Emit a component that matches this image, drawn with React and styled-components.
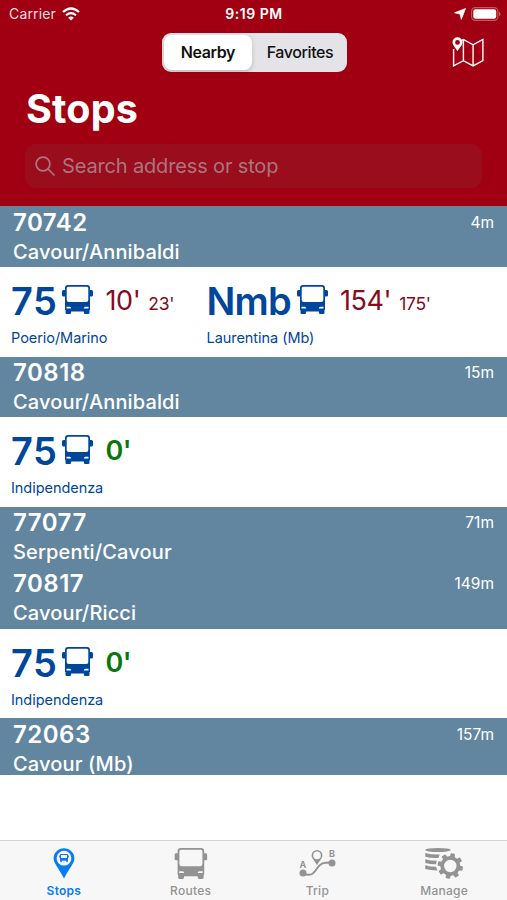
import styled, { createGlobalStyle } from "styled-components";

const GlobalStyle = createGlobalStyle`
  * {
    box-sizing: border-box;
  }
  body {
    margin: 0;
    background: white;
    font-family: Inter, "Liberation Sans", sans-serif;
  }
  svg {
    display: block;
    flex: none;
  }
`;

const Screen = styled.div`
  width: 507px;
  height: 900px;
  display: flex;
  flex-direction: column;
  background: white;
  overflow: hidden;
`;

const Header = styled.header`
  height: 206px;
  flex: none;
  background: #a00012;
  color: white;
`;

const StatusBar = styled.div`
  height: 27px;
  padding: 0 8px 0 9px;
  display: grid;
  grid-template-columns: 1fr auto 1fr;
  align-items: center;
  font-size: 14px;
`;

const StatusGroup = styled.div`
  display: flex;
  align-items: center;
  justify-content: ${(props) => props.$align};
  gap: ${(props) => (props.$align === "flex-end" ? "5px" : "6px")};
  margin-right: ${(props) => (props.$align === "flex-end" ? "-2px" : 0)};
`;

const Carrier = styled.span`
  color: #f6dfe2;
  letter-spacing: 0.15px;
`;

const Clock = styled.span`
  font-weight: 600;
  letter-spacing: 0.5px;
`;

const NavBar = styled.div`
  height: 51px;
  padding: 0 23px 0 162px;
  display: flex;
  align-items: center;
  justify-content: space-between;
`;

const Segmented = styled.div`
  width: 185px;
  height: 39px;
  padding: 2px;
  display: flex;
  border-radius: 9px;
  background: #e4e3e7;
`;

const Segment = styled.button`
  width: ${(props) => (props.$active ? "88px" : "93px")};
  padding: ${(props) => (props.$active ? "0 0 2px" : "0 0 2px 3px")};
  border: none;
  border-radius: 8px;
  background: ${(props) => (props.$active ? "white" : "transparent")};
  box-shadow: ${(props) =>
    props.$active ? "0 2px 5px rgba(0, 0, 0, 0.18)" : "none"};
  color: #111;
  font-family: inherit;
  font-size: 16px;
  font-weight: ${(props) => (props.$active ? 600 : 500)};
  letter-spacing: -0.4px;
  cursor: pointer;
`;

const Title = styled.h1`
  height: 66px;
  margin: 0;
  padding: 6px 0 0 26px;
  font-size: 39.5px;
  line-height: 50px;
  font-weight: 700;
  letter-spacing: 0.2px;
`;

const SearchField = styled.div`
  width: 457px;
  height: 44px;
  margin-left: 25px;
  padding-left: 10px;
  display: flex;
  align-items: center;
  gap: 7px;
  border-radius: 11px;
  background: #990d1d;
  color: #ab767d;
  font-size: 20px;
`;

const Placeholder = styled.span`
  letter-spacing: -0.15px;
`;

const List = styled.main`
  flex: 1;
`;

const StopHeader = styled.div`
  height: ${(props) => props.$height}px;
  padding: ${(props) => props.$top}px 13px 0;
  display: flex;
  justify-content: space-between;
  background: #6286a0;
  color: white;
`;

const StopName = styled.div`
  display: flex;
  flex-direction: column;
`;

const StopCode = styled.span`
  font-size: 24px;
  line-height: 31px;
  font-weight: 600;
  letter-spacing: 0.5px;
`;

const StopAddress = styled.span`
  font-size: 20px;
  line-height: 29px;
  font-weight: 500;
  letter-spacing: 0.14px;
`;

const Distance = styled.span`
  font-size: 15.5px;
  line-height: 32px;
`;

const Arrivals = styled.div`
  height: ${(props) => props.$height}px;
  padding-left: 11px;
  display: flex;
`;

const Line = styled.div`
  width: 195.5px;
  color: #00469a;
`;

const LineTop = styled.div`
  height: 60px;
  padding-top: 7px;
  display: flex;
  align-items: center;
`;

const LineNumber = styled.span`
  font-size: 38px;
  line-height: 46px;
  font-weight: 600;
  letter-spacing: ${(props) => (props.$wide ? "-0.8px" : "0.5px")};
  margin-right: ${(props) => (props.$wide ? "6px" : "5px")};
`;

const BusIcon = styled.svg`
  margin-top: -2px;
`;

const Minutes = styled.span`
  margin-left: 12px;
  font-size: 27px;
  font-weight: ${(props) => (props.$now ? 600 : 400)};
  letter-spacing: -0.4px;
  color: ${(props) => (props.$now ? "#087808" : "#850b20")};
`;

const NextMinutes = styled.span`
  margin: 6px 0 0 8px;
  font-size: 17.5px;
  letter-spacing: -0.3px;
  color: #850b20;
`;

const Direction = styled.div`
  font-size: 14.5px;
  line-height: 22px;
  letter-spacing: -0.05px;
`;

const TabBar = styled.nav`
  height: 60px;
  flex: none;
  display: grid;
  grid-template-columns: repeat(4, 1fr);
  border-top: 1px solid #d6d6d6;
  background: #f7f7f7;
`;

const Tab = styled.a`
  padding: 5px 0 0 1px;
  display: flex;
  flex-direction: column;
  align-items: center;
  color: ${(props) => (props.$active ? "#087cf5" : "#939393")};
  font-size: 12px;
  font-weight: ${(props) => (props.$active ? 600 : 500)};
  line-height: 14px;
  letter-spacing: 0.25px;
  gap: 4px;
`;

const stops = [
  {
    code: "70742",
    address: "Cavour/Annibaldi",
    distance: "4m",
    height: 61,
    top: 1,
    rowHeight: 90,
    lines: [
      { number: "75", now: "10'", next: "23'", direction: "Poerio/Marino" },
      { number: "Nmb", now: "154'", next: "175'", direction: "Laurentina (Mb)" },
    ],
  },
  {
    code: "70818",
    address: "Cavour/Annibaldi",
    distance: "15m",
    height: 60,
    top: 0,
    rowHeight: 90,
    lines: [{ number: "75", now: "0'", direction: "Indipendenza" }],
  },
  {
    code: "77077",
    address: "Serpenti/Cavour",
    distance: "71m",
    height: 61,
    top: 0,
    lines: [],
  },
  {
    code: "70817",
    address: "Cavour/Ricci",
    distance: "149m",
    height: 61,
    top: 0,
    rowHeight: 89,
    lines: [{ number: "75", now: "0'", direction: "Indipendenza" }],
  },
  {
    code: "72063",
    address: "Cavour (Mb)",
    distance: "157m",
    height: 57,
    top: 1,
    lines: [],
  },
];

const Bus = ({ width = 31, height = 29 }) => (
  <BusIcon
    width={width}
    height={height}
    viewBox="0 0 31 29"
    preserveAspectRatio="none"
    fill="currentColor"
  >
    <path
      fillRule="evenodd"
      d="M6 0h19q3 0 3 3v2h1.500q1.500 0 1.500 1.500v3.700q0 1.300-1.500 1.300H28V25h-.5v2.700q0 1.300-1.300 1.300h-3q-1.300 0-1.300-1.300V26.500H9.100v1.200q0 1.300-1.300 1.300h-3q-1.300 0-1.300-1.300V25H3V11.500H1.500Q0 11.500 0 10.200V6.500Q0 5 1.500 5H3V3q0-3 3-3zM6.200 1.700q-1.500 0-1.500 1.500V15q0 2 2 2h17.600q2 0 2-2V3.200q0-1.500-1.500-1.500zM4.500 21.700v1.800h4.700q0-1.600-1.700-1.700zM26.500 21.700v1.800h-4.700q0-1.600 1.700-1.700z"
    />
  </BusIcon>
);

const Wifi = () => (
  <svg width="18" height="14" viewBox="0 0 18 14" fill="none" stroke="white">
    <path d="M1 5Q9-2 17 5" strokeWidth="2.300" />
    <path d="M4 8.200q5-4.300 10 0" strokeWidth="2.100" />
    <path d="M9 13.600 6.100 10.700q2.900-2.400 5.800 0z" fill="white" stroke="none" />
  </svg>
);

const LocationArrow = () => (
  <svg width="12" height="12" viewBox="0 0 12 12" fill="white">
    <path d="M11.500.5 7.300 11.500 6 6 .5 4.800z" stroke="white" strokeWidth=".7" strokeLinejoin="round" />
  </svg>
);

const Battery = () => (
  <svg width="30" height="14" viewBox="0 0 30 14">
    <rect x=".6" y=".6" width="26.300" height="12.800" rx="3.800" fill="none" stroke="#c25a66" strokeWidth="1.100" />
    <rect x="2.300" y="2.300" width="22.900" height="9.400" rx="2.200" fill="white" />
    <path d="M28 4.700q1.500.6 1.500 2.300T28 9.300z" fill="#c25a66" />
  </svg>
);

const MapIcon = () => (
  <svg width="32" height="31" viewBox="0 0 32 31" fill="none" stroke="white" strokeWidth="1.400">
    <path d="M1.600 12v16.900l9.800-5.200 9.700 5.200 9.800-5.200V2.500l-9.800 5.300L11.400 2.500 9.800 3.400M11.400 2.500v21.500M21.100 7.800v21" />
    <path
      d="M5.500.3a5 5 0 0 1 5 5c0 2.500-2.500 5-5 8.900-2.500-3.900-5-6.400-5-8.900a5 5 0 0 1 5-5zm0 2.700a2.400 2.400 0 1 0 0 4.800 2.400 2.400 0 0 0 0-4.800z"
      fill="white"
      fillRule="evenodd"
      stroke="none"
    />
  </svg>
);

const SearchIcon = () => (
  <svg width="20" height="20" viewBox="0 0 20 20" fill="none" stroke="currentColor" strokeWidth="1.700">
    <circle cx="8" cy="8" r="6.900" />
    <path d="m13 13 6 6" strokeLinecap="round" />
  </svg>
);

const StopsIcon = () => (
  <svg width="24" height="34" viewBox="0 0 24 34" fill="currentColor">
    <path
      fillRule="evenodd"
      d="M12 2.200c5.800 0 10.400 4.400 10.400 10.100 0 5.200-4.900 9.500-10.400 20.200C6.500 21.800 1.600 17.500 1.600 12.300 1.600 6.600 6.200 2.200 12 2.200zm0 2.600a7.400 7.400 0 1 0 0 14.800 7.400 7.400 0 0 0 0-14.800z"
    />
    <path
      fillRule="evenodd"
      d="M9 8h6q1 0 1 1v.5h.8v2H16v4.300h-1.800v-1H9.800v1H8v-4.300h-.8v-2H8V9q0-1 1-1zm0 1v3h6V9z"
    />
  </svg>
);

const TripIcon = () => (
  <svg width="38" height="34" viewBox="0 0 38 34" fill="currentColor">
    <circle cx="5" cy="27" r="3.500" />
    <circle cx="34" cy="17" r="3.500" />
    <path
      d="M5 28c8 2 10 .5 14-5.500 3-5 5.500-6 15-6"
      fill="none"
      stroke="currentColor"
      strokeWidth="1.900"
    />
    <path
      fillRule="evenodd"
      d="M19 4a5.400 5.400 0 0 1 5.400 5.400c0 2.800-2.700 4.500-5.400 9.900-2.700-5.400-5.400-7.100-5.400-9.900A5.400 5.400 0 0 1 19 4zm0 1.600a3.800 3.800 0 1 0 0 7.600 3.800 3.800 0 0 0 0-7.600z"
    />
    <text x="5" y="21.500" fontSize="9" fontWeight="700" textAnchor="middle">
      A
    </text>
    <text x="34" y="10.500" fontSize="9" fontWeight="700" textAnchor="middle">
      B
    </text>
  </svg>
);

const teeth = [0, 45, 90, 135, 180, 225, 270, 315];

// stacked disks with a cog in front
const ManageIcon = () => (
  <svg width="40" height="34" viewBox="0 0 40 34" fill="currentColor">
    <ellipse cx="14" cy="4" rx="12.700" ry="2" />
    <path d="M1.300 7q6 1.800 14.500 1.500l-1.500 3.500q-8 .3-13-1.200zM1.300 13.200q5 1.500 11.500 1.500l-.8 3.500q-6 0-10.700-1.300zM1.300 19.300q5 1.500 10.700 1.500l1.500 3.600q-7 0-12.200-1.300z" />
    <circle cx="26.300" cy="20" r="8.100" fill="none" stroke="currentColor" strokeWidth="3.800" />
    {teeth.map((angle) => (
      <rect
        key={angle}
        x="24"
        y="7.300"
        width="4.600"
        height="4.500"
        rx="1"
        transform={`rotate(${angle + 12} 26.300 20)`}
      />
    ))}
  </svg>
);

const RoutesIcon = () => (
  <svg width="34" height="34" viewBox="0 0 34 34">
    <g transform="translate(.4 2)">
      <Bus width={33} height={31} />
    </g>
  </svg>
);

const App = () => {
  return (
    <Screen>
      <GlobalStyle />
      <Header>
        <StatusBar>
          <StatusGroup $align="flex-start">
            <Carrier>Carrier</Carrier>
            <Wifi />
          </StatusGroup>
          <Clock>9:19 PM</Clock>
          <StatusGroup $align="flex-end">
            <LocationArrow />
            <Battery />
          </StatusGroup>
        </StatusBar>
        <NavBar>
          <Segmented>
            <Segment $active>Nearby</Segment>
            <Segment>Favorites</Segment>
          </Segmented>
          <MapIcon />
        </NavBar>
        <Title>Stops</Title>
        <SearchField>
          <SearchIcon />
          <Placeholder>Search address or stop</Placeholder>
        </SearchField>
      </Header>
      <List>
        {stops.map((stop) => (
          <section key={stop.code}>
            <StopHeader $height={stop.height} $top={stop.top}>
              <StopName>
                <StopCode>{stop.code}</StopCode>
                <StopAddress>{stop.address}</StopAddress>
              </StopName>
              <Distance>{stop.distance}</Distance>
            </StopHeader>
            {stop.lines.length > 0 && (
              <Arrivals $height={stop.rowHeight}>
                {stop.lines.map((line) => (
                  <Line key={line.number}>
                    <LineTop>
                      <LineNumber $wide={line.number.length > 2}>
                        {line.number}
                      </LineNumber>
                      <Bus />
                      <Minutes $now={line.now === "0'"}>{line.now}</Minutes>
                      {line.next && <NextMinutes>{line.next}</NextMinutes>}
                    </LineTop>
                    <Direction>{line.direction}</Direction>
                  </Line>
                ))}
              </Arrivals>
            )}
          </section>
        ))}
      </List>
      <TabBar>
        <Tab $active>
          <StopsIcon />
          Stops
        </Tab>
        <Tab>
          <RoutesIcon />
          Routes
        </Tab>
        <Tab>
          <TripIcon />
          Trip
        </Tab>
        <Tab>
          <ManageIcon />
          Manage
        </Tab>
      </TabBar>
    </Screen>
  );
};

export default App;
